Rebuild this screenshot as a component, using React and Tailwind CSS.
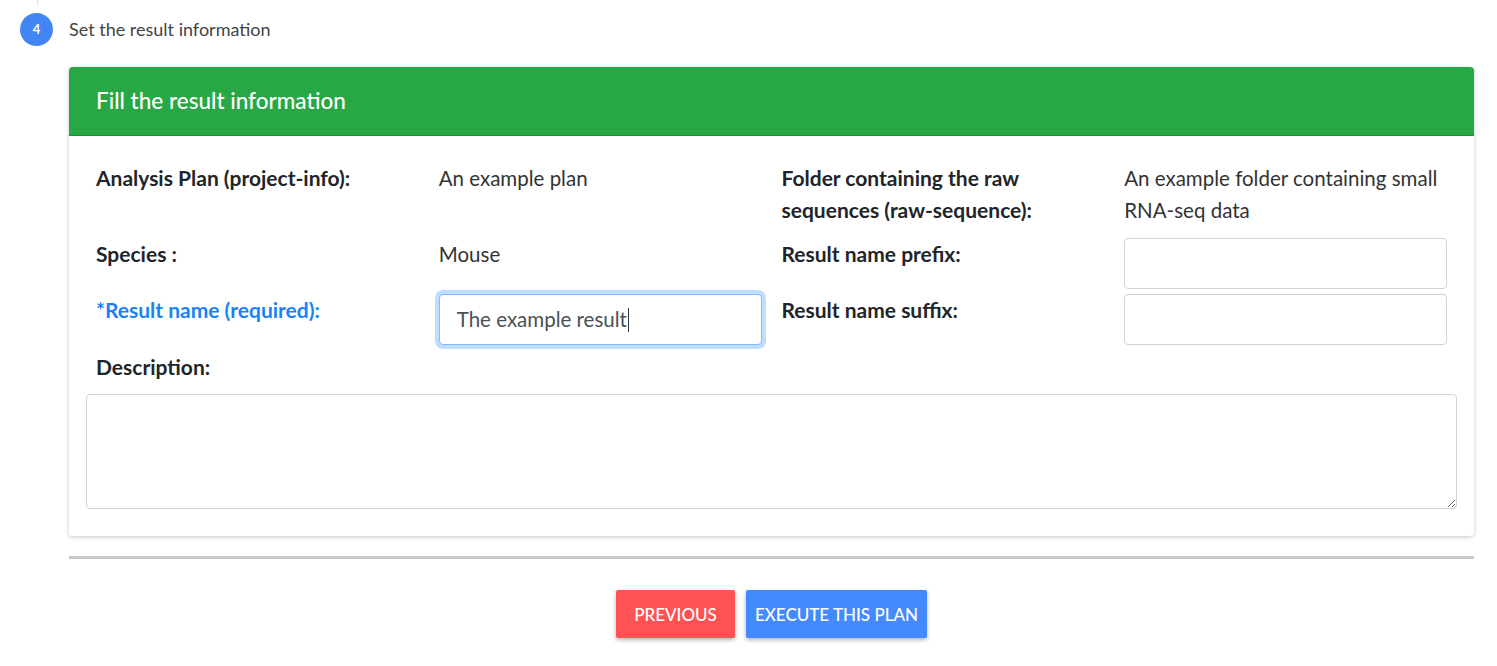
import React from 'react';

const font = { fontFamily: 'Lato, "Open Sans", sans-serif' };

function Label({ children, className = '' }) {
  return <div className={`px-[10px] font-bold text-[21px] leading-[32px] text-[#212529] ${className}`}>{children}</div>;
}

function Value({ children }) {
  return <div className="px-[10px] text-[20.5px] leading-[32px] text-[#333]">{children}</div>;
}

function Field({ value, focused }) {
  const ring = focused
    ? 'border-[#80bdff] shadow-[0_0_0_4px_rgba(0,123,255,0.25)]'
    : 'border-[#ced4da]';
  return (
    <div className="px-[10px]">
      <div className={`h-[51px] bg-white border rounded-[4px] flex items-center px-[17px] text-[20.5px] text-[#495057] ${ring}`}>
        {value}
        {focused && <span className="w-px h-[24px] bg-[#333] ml-px" />}
      </div>
    </div>
  );
}

export default function App() {
  return (
    <div className="bg-white min-h-[666px] relative" style={font}>
      <div className="absolute left-[37px] top-0 w-px h-[5px] bg-[#ddd]" />
      <div className="px-[20px] pt-[13px] flex items-center gap-[16px]">
        <div className="w-[33px] h-[33px] rounded-full bg-[#4285f4] text-white text-[13px] font-bold flex items-center justify-center">4</div>
        <div className="text-[18px] text-[#444]">Set the result information</div>
      </div>

      <div className="ml-[69px] mr-[23px] mt-[21px]">
        <div className="rounded-[4px] shadow-[0_1px_4px_rgba(0,0,0,0.22)] bg-white overflow-hidden">
          <div className="bg-[#28a745] h-[68px] flex items-center px-[27px] text-white text-[22.5px] font-medium">
            Fill the result information
          </div>
          <div className="px-[17px] pt-[26px] pb-[27px] border-t border-[#1e8e3a]">
            <div className="grid grid-cols-4">
              <Label>Analysis Plan (project-info):</Label>
              <Value>An example plan</Value>
              <Label>Folder containing the raw<br />sequences (raw-sequence):</Label>
              <Value>An example folder containing small<br />RNA-seq data</Value>
            </div>
            <div className="grid grid-cols-4 mt-[12px]">
              <Label>Species :</Label>
              <Value>Mouse</Value>
              <Label>Result name prefix:</Label>
              <Field value="" />
            </div>
            <div className="grid grid-cols-4 mt-[5px]">
              <Label className="!text-[#1a82f7]">*Result name (required):</Label>
              <Field value="The example result" focused />
              <Label>Result name suffix:</Label>
              <Field value="" />
            </div>
            <Label className="mt-[6px]">Description:</Label>
            <textarea className="mt-[11px] block w-full h-[115px] border border-[#ced4da] rounded-[4px] outline-none" />
          </div>
        </div>

        <div className="mt-[20px] h-[3px] bg-[#c8c8c8]" />

        <div className="flex justify-center gap-[11px] mt-[31px]">
          <button className="h-[48px] w-[119px] pt-[2px] bg-[#ff5252] text-white text-[17px] font-medium rounded-[2px] shadow-[0_2px_4px_rgba(0,0,0,0.3)]">PREVIOUS</button>
          <button className="h-[48px] w-[181px] pt-[2px] bg-[#448aff] text-white text-[17px] font-medium rounded-[2px] shadow-[0_2px_4px_rgba(0,0,0,0.3)]">EXECUTE THIS PLAN</button>
        </div>
      </div>
    </div>
  );
}
